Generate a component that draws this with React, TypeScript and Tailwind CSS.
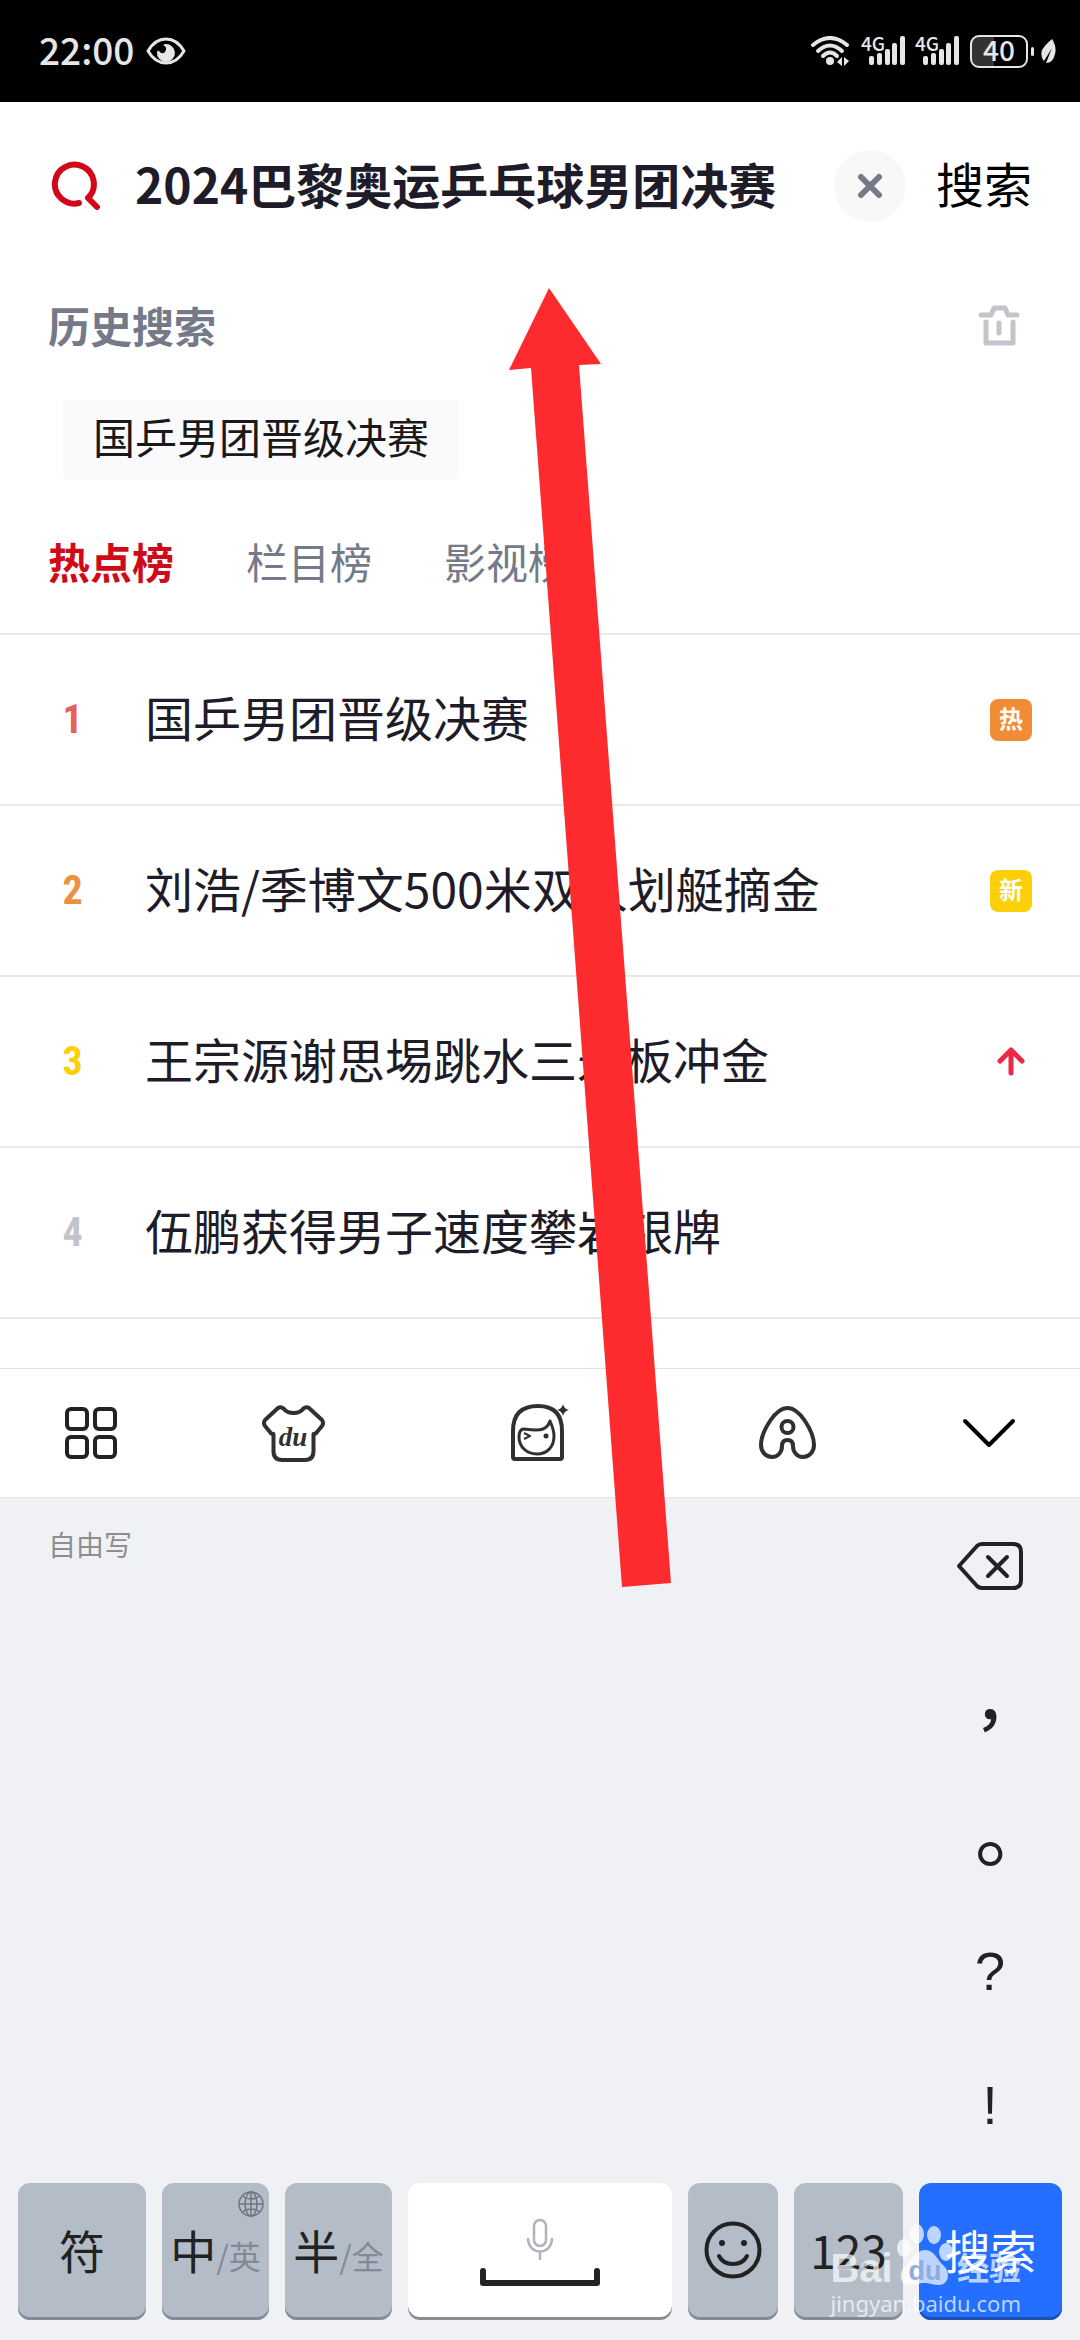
import React, { useState } from "react";

interface HotItem {
  rank: number;
  title: string;
  rankColor: string;
  tag?: "hot" | "new" | "up";
}

const hotList: HotItem[] = [
  { rank: 1, title: "国乒男团晋级决赛", rankColor: "text-[#e8605c]", tag: "hot" },
  { rank: 2, title: "刘浩/季博文500米双人划艇摘金", rankColor: "text-[#ee9040]", tag: "new" },
  { rank: 3, title: "王宗源谢思埸跳水三米板冲金", rankColor: "text-[#fccf08]", tag: "up" },
  { rank: 4, title: "伍鹏获得男子速度攀岩银牌", rankColor: "text-[#c3c4ca]" },
];

const tabs = ["热点榜", "栏目榜", "影视榜"];

const SignalIcon = () => (
  <svg width="44" height="46" viewBox="0 -8 44 46" fill="#e6e6e6">
    <text x="0" y="15" fontSize="19" fontWeight="500">
      4G
    </text>
    <rect x="8" y="20" width="5" height="9" rx="2" />
    <rect x="16" y="17" width="5" height="12" rx="2" />
    <rect x="24" y="13" width="5" height="16" rx="2" />
    <rect x="31" y="7" width="5" height="22" rx="2" />
    <rect x="39" y="0" width="5" height="29" rx="2" />
  </svg>
);

const StatusBar = () => (
  <header className="flex h-[102px] items-center justify-between bg-black pl-[39px] pr-6 text-[#e6e6e6]">
    <div className="flex items-center gap-3">
      <span className="pb-1 text-[37px] leading-[38px] font-medium">22:00</span>
      <svg width="40" height="28" viewBox="0 0 40 28">
        <path
          d="M2 14 Q9 2 20 2 Q31 2 38 14 Q31 26 20 26 Q9 26 2 14Z"
          fill="none"
          stroke="#e6e6e6"
          strokeWidth="3"
          strokeLinejoin="round"
        />
        <path
          d="M19 7 A9 9 0 1 1 11 15 Q12 13 13 14 Q16 18 19 15 Q22 10 17 8Z"
          fill="#e6e6e6"
        />
      </svg>
    </div>
    <div className="flex items-center">
      <svg width="38" height="30" viewBox="0 0 38 30" className="mr-3">
        <g fill="none" stroke="#e6e6e6" strokeWidth="4" strokeLinecap="round">
          <path d="M2 9 Q19 -5 36 9" />
          <path d="M7 15 Q19 4 31 15" />
          <path d="M12 20 Q19 13 26 20" />
        </g>
        <circle cx="19" cy="25" r="4" fill="#e6e6e6" />
        <path d="M31 21 V30 L26 26Z M33 21 L38 25 L33 30Z" fill="#e6e6e6" />
      </svg>
      <div className="mr-[11px] flex gap-[10px]">
        <SignalIcon />
        <SignalIcon />
      </div>
      <div className="flex h-[33px] w-[58px] items-center justify-center rounded-[9px] border-2 border-[#e6e6e6] bg-[linear-gradient(90deg,#333_40%,#000_40%)] pb-1 text-[28px] leading-[28px] font-medium">
        40
      </div>
      <span className="mr-[7px] ml-[3px] h-[9px] w-[3px] rounded-sm bg-[#e6e6e6]" />
      <svg width="15" height="25" viewBox="0 0 15 25">
        <path d="M11 0 Q16 8 14 15 Q12 24 5 24 L11 9 L3 22 Q-1 17 1 11 Q4 6 11 0Z" fill="#e6e6e6" />
      </svg>
    </div>
  </header>
);

const Tag = ({ tag }: { tag?: HotItem["tag"] }) => {
  if (tag === "up") {
    return (
      <svg width="42" height="42" viewBox="0 0 42 42" fill="none" stroke="#ee2844" strokeWidth="5" strokeLinecap="round" strokeLinejoin="round">
        <path d="M21 32 V10 M10 20 L21 9 L32 20" />
      </svg>
    );
  }
  if (tag === "hot") {
    return (
      <span className="flex size-[42px] items-center justify-center rounded-lg bg-[#f08c34] pb-1 text-2xl font-bold text-white">
        热
      </span>
    );
  }
  if (tag === "new") {
    return (
      <span className="flex size-[42px] items-center justify-center rounded-lg bg-[#fccf08] pb-1 text-2xl font-bold text-white">
        新
      </span>
    );
  }
  return null;
};

const Toolbar = () => (
  <div className="grid h-[130px] grid-cols-[182fr_222fr_272fr_222fr_182fr] items-center justify-items-center border-y border-[#e2e2e4] bg-white">
    <button aria-label="菜单">
      <svg width="52" height="52" viewBox="0 0 52 52" fill="none" stroke="#222" strokeWidth="4">
        <rect x="2" y="2" width="20" height="20" rx="4" />
        <rect x="30" y="2" width="20" height="20" rx="4" />
        <rect x="2" y="30" width="20" height="20" rx="4" />
        <rect x="30" y="30" width="20" height="20" rx="4" />
      </svg>
    </button>
    <button aria-label="皮肤">
      <svg width="63" height="57" viewBox="0 0 63 57">
        <path
          d="M11.500 29 V46 Q11.500 55 20 55 H43 Q51.500 55 51.500 46 V29 Q54 29 55 27 L60 21 Q62 18 60 15 L47 3 Q44 1 41 4 Q38 8 31.500 8 Q25 8 22 4 Q19 1 16 3 L3 15 Q1 18 3 21 L8 27 Q9 29 11.500 29Z"
          fill="none"
          stroke="#303030"
          strokeWidth="4"
          strokeLinejoin="round"
        />
        <text
          x="31"
          y="41"
          textAnchor="middle"
          fontSize="27"
          fontWeight="700"
          fontStyle="italic"
          fontFamily="Liberation Serif, serif"
          fill="#303030"
        >
          du
        </text>
      </svg>
    </button>
    <button aria-label="表情形象">
      <svg width="60" height="58" viewBox="0 0 60 58" fill="none" stroke="#303030" strokeWidth="4" strokeLinejoin="round">
        <path d="M3 27 Q3 2 28 2 Q52 2 52 27 V53 Q52 55 50 55 H5 Q3 55 3 53Z" />
        <path
          d="M9 33 Q9 25 14 25 C22 26 28 27 33 25 Q38 23 40 17 Q44 26 44 32 C44 43 37 50 27 50 C17 50 9 43 9 33Z"
          strokeWidth="3"
        />
        <path d="M14 29 L20 32 L14 35" strokeWidth="2" />
        <circle cx="36" cy="32" r="2.500" fill="#303030" stroke="none" />
        <path d="M53 0 Q54 5 59 6 Q54 7 53 12 Q52 7 47 6 Q52 5 53 0Z" fill="#303030" stroke="none" />
      </svg>
    </button>
    <button aria-label="智能助手">
      <svg width="57" height="54" viewBox="0 0 57 54" fill="none" stroke="#303030" strokeWidth="4">
        <path d="M28.500 2 C34 2 40 6 46 15 C52 24 55 33 55 39 C55 46 50 51 44 51 C38 51 34 46 34 40 C34 36 32 34 28.500 34 C25 34 23 36 23 40 C23 46 19 51 13 51 C7 51 2 46 2 39 C2 33 5 24 11 15 C17 6 23 2 28.500 2Z" />
        <circle cx="28.500" cy="21" r="6" />
      </svg>
    </button>
    <button aria-label="收起键盘">
      <svg width="54" height="30" viewBox="0 0 54 30" fill="none" stroke="#000" strokeWidth="4" strokeLinecap="round" strokeLinejoin="round">
        <path d="M3 3 L27 27 L51 3" />
      </svg>
    </button>
  </div>
);

const keyClass =
  "relative flex h-[137px] items-center justify-center rounded-xl bg-[#b4bcc8] pb-1 text-[46px] text-[#222] shadow-[inset_0_-3px_0_#858a94]";

const KeyRow = () => (
  <div className="grid grid-cols-[128fr_107fr_107fr_264fr_90fr_109fr_143fr] gap-4 px-[18px] pb-5">
    <button className={keyClass}>符</button>
    <button className={keyClass}>
      <span className="flex items-baseline">
        中<span className="text-[32px] text-[#838a96]">/英</span>
      </span>
      <svg width="28" height="28" viewBox="0 0 28 28" className="absolute top-[7px] right-1" fill="none" stroke="#6f7680" strokeWidth="1.500">
        <circle cx="14" cy="14" r="12" />
        <ellipse cx="14" cy="14" rx="6" ry="12" />
        <path d="M14 2 V26 M2 14 H26 M5 6 Q14 12 23 6 M5 22 Q14 16 23 22" />
      </svg>
    </button>
    <button className={keyClass}>
      <span className="flex items-baseline">
        半<span className="text-[32px] text-[#838a96]">/全</span>
      </span>
    </button>
    <button
      aria-label="空格"
      className="flex h-[137px] flex-col items-center justify-center gap-2 rounded-xl bg-white shadow-[inset_0_-3px_0_#8c8c90]"
    >
      <svg width="28" height="42" viewBox="0 0 28 42" fill="none" stroke="#b0b5bc" strokeWidth="2.500">
        <rect x="8" y="2" width="12" height="26" rx="6" />
        <path d="M2 20 C2 38 26 38 26 20 M14 33 V42" />
      </svg>
      <svg width="120" height="18" viewBox="0 0 120 18" fill="none" stroke="#222" strokeWidth="6" strokeLinecap="round" strokeLinejoin="round">
        <path d="M3 3 V15 H117 V3" />
      </svg>
    </button>
    <button aria-label="表情" className={keyClass}>
      <svg width="58" height="58" viewBox="0 0 58 58" fill="none" stroke="#222" strokeWidth="4" strokeLinecap="round">
        <circle cx="29" cy="29" r="26.500" />
        <path d="M15 35 Q19 43 29 43 Q39 43 43 35" />
        <circle cx="18" cy="22" r="3" fill="#222" stroke="none" />
        <circle cx="40" cy="22" r="3" fill="#222" stroke="none" />
      </svg>
    </button>
    <button className={keyClass}>123</button>
    <button className="flex h-[137px] items-center justify-center rounded-xl bg-[#246fff] pb-1 text-[46px] text-white shadow-[inset_0_-3px_0_#1d50b0]">
      搜索
    </button>
  </div>
);

const Watermark = () => (
  <div className="pointer-events-none absolute right-[59px] bottom-5 flex flex-col text-white/70">
    <div className="flex items-end justify-between">
      <span className="font-['Liberation_Sans',sans-serif] text-[40px] leading-[36px] font-bold">Bai</span>
      <svg width="56" height="62" viewBox="0 0 56 62" fill="#fff" fillOpacity="0.7">
        <ellipse cx="7" cy="24" rx="7" ry="9" />
        <ellipse cx="20" cy="10" rx="7" ry="10" />
        <ellipse cx="37" cy="11" rx="7" ry="9" />
        <ellipse cx="49" cy="28" rx="7" ry="9" />
        <path d="M28 26 C38 26 40 36 46 41 C54 48 52 61 42 61 C36 61 32 59 28 59 C22 59 19 61 13 61 C2 61 1 48 9 41 C15 36 18 26 28 26Z" />
        <text x="28" y="56" textAnchor="middle" fontSize="27" fontWeight="700" fontFamily="Liberation Sans, sans-serif" fill="#8fadde" fillOpacity="1">
          du
        </text>
      </svg>
      <span className="text-[32px] leading-[40px] font-bold">经验</span>
    </div>
    <span className="font-['Noto_Sans',sans-serif] text-[22px] leading-[34px]">jingyan.baidu.com</span>
  </div>
);

const App: React.FC = () => {
  const [keyword, setKeyword] = useState("2024巴黎奥运乒乓球男团决赛");
  const [activeTab, setActiveTab] = useState("热点榜");

  return (
    <div className="relative flex min-h-screen flex-col bg-white font-['Noto_Sans_CJK_SC',sans-serif]">
      <StatusBar />

      {/* Search */}
      <form className="flex items-center pt-12 pr-12 pl-[51px]" onSubmit={(e) => e.preventDefault()}>
        <svg width="50" height="50" viewBox="0 0 50 50" fill="none" stroke="#d4071a" strokeWidth="6" strokeLinecap="round" strokeLinejoin="round">
          <path d="M28 42 A19.500 19.500 0 1 1 37 37 L46 46" />
        </svg>
        <input
          type="text"
          aria-label="搜索关键词"
          value={keyword}
          onChange={(e) => setKeyword(e.target.value)}
          className="ml-[34px] h-[72px] min-w-0 flex-1 pb-1.5 text-5xl font-bold text-[#1e1c28] outline-none"
        />
        <button
          type="button"
          aria-label="清空"
          onClick={() => setKeyword("")}
          className="flex size-[72px] items-center justify-center rounded-full bg-[#f8f8f9]"
        >
          <svg width="26" height="26" viewBox="0 0 26 26" stroke="#757a88" strokeWidth="6" strokeLinecap="round">
            <path d="M4 4 L22 22 M22 4 L4 22" />
          </svg>
        </button>
        <button type="submit" className="ml-[30px] pb-2 text-5xl leading-[64px] text-black">
          搜索
        </button>
      </form>

      {/* History */}
      <section>
        <div className="mt-20 flex items-center justify-between pr-[60px] pl-12">
          <h2 className="text-[42px] leading-[46px] font-bold text-[#757a88]">历史搜索</h2>
          <button aria-label="清除历史">
            <svg width="42" height="42" viewBox="0 0 42 42" fill="none" stroke="#c3c4cc" strokeWidth="5" strokeLinecap="round" strokeLinejoin="round">
              <path d="M3 11 H13 L16 4 H27 L30 11 H39 M8 18 V39 H35 V18 M21 19 V29" />
            </svg>
          </button>
        </div>
        <div className="mt-[52px] flex px-[63px]">
          <button className="bg-[#fafafc] px-[30px] pt-3 pb-5 text-[42px] leading-[47px] text-[#191919]">
            国乒男团晋级决赛
          </button>
        </div>
      </section>

      {/* Rankings */}
      <nav className="mt-[58px] flex gap-[72px] border-b-2 border-[#e8e8e8] px-12 pb-12">
        {tabs.map((tab) => (
          <button
            key={tab}
            onClick={() => setActiveTab(tab)}
            className={`text-[42px] leading-[48px] ${
              tab === activeTab ? "font-bold text-[#d00a18]" : "text-[#757a88]"
            }`}
          >
            {tab}
          </button>
        ))}
      </nav>
      <ol className="flex-1">
        {hotList.map((item) => (
          <li key={item.rank} className="flex h-[171px] items-center border-b-2 border-[#e8e8e8] pr-12">
            <span
              className={`w-[145px] text-center font-['Roboto_Condensed','Open_Sans_Condensed',Roboto,sans-serif] text-[40px] font-bold ${item.rankColor}`}
            >
              {item.rank}
            </span>
            <a href="#" className="flex-1 pb-2 text-5xl text-[#1e1c28]">
              {item.title}
            </a>
            <Tag tag={item.tag} />
          </li>
        ))}
      </ol>

      {/* Handwriting keyboard */}
      <section className="mt-12 bg-[#f0f1f5]">
        <Toolbar />
        <div className="flex justify-between">
          <p className="pt-7 pl-12 text-[28px] leading-[36px] text-[#8e8e90]">自由写</p>
          <div className="flex w-[180px] flex-col font-['Liberation_Sans',sans-serif] text-[54px] text-[#222]">
            <button aria-label="删除" className="flex h-[136px] items-center justify-center">
              <svg width="66" height="48" viewBox="0 0 66 48" fill="none" stroke="#222" strokeWidth="4" strokeLinecap="round" strokeLinejoin="round">
                <path d="M2 24 L20 4 Q22 2 25 2 H56 Q64 2 64 10 V38 Q64 46 56 46 H25 Q22 46 20 44Z" />
                <path d="M31 15 L50 34 M50 15 L31 34" />
              </svg>
            </button>
            <button className="h-[150px] pt-3 font-['Noto_Sans_CJK_TC',sans-serif] text-[64px] font-medium">，</button>
            <button className="h-[130px] font-['Noto_Sans_CJK_TC',sans-serif] text-[80px] leading-[130px]">。</button>
            <button className="h-[114px]">?</button>
            <button className="h-[155px]">!</button>
          </div>
        </div>
        <KeyRow />
      </section>

      <svg
        width="164"
        height="1300"
        viewBox="0 0 164 1300"
        className="pointer-events-none absolute top-[288px] left-[509px]"
        fill="#fd2b2d"
      >
        <path d="M40 0 L92 76 L70 77 L162 1295 L113 1299 L22 80 L0 82Z" />
      </svg>
      <Watermark />
    </div>
  );
};

export default App;
